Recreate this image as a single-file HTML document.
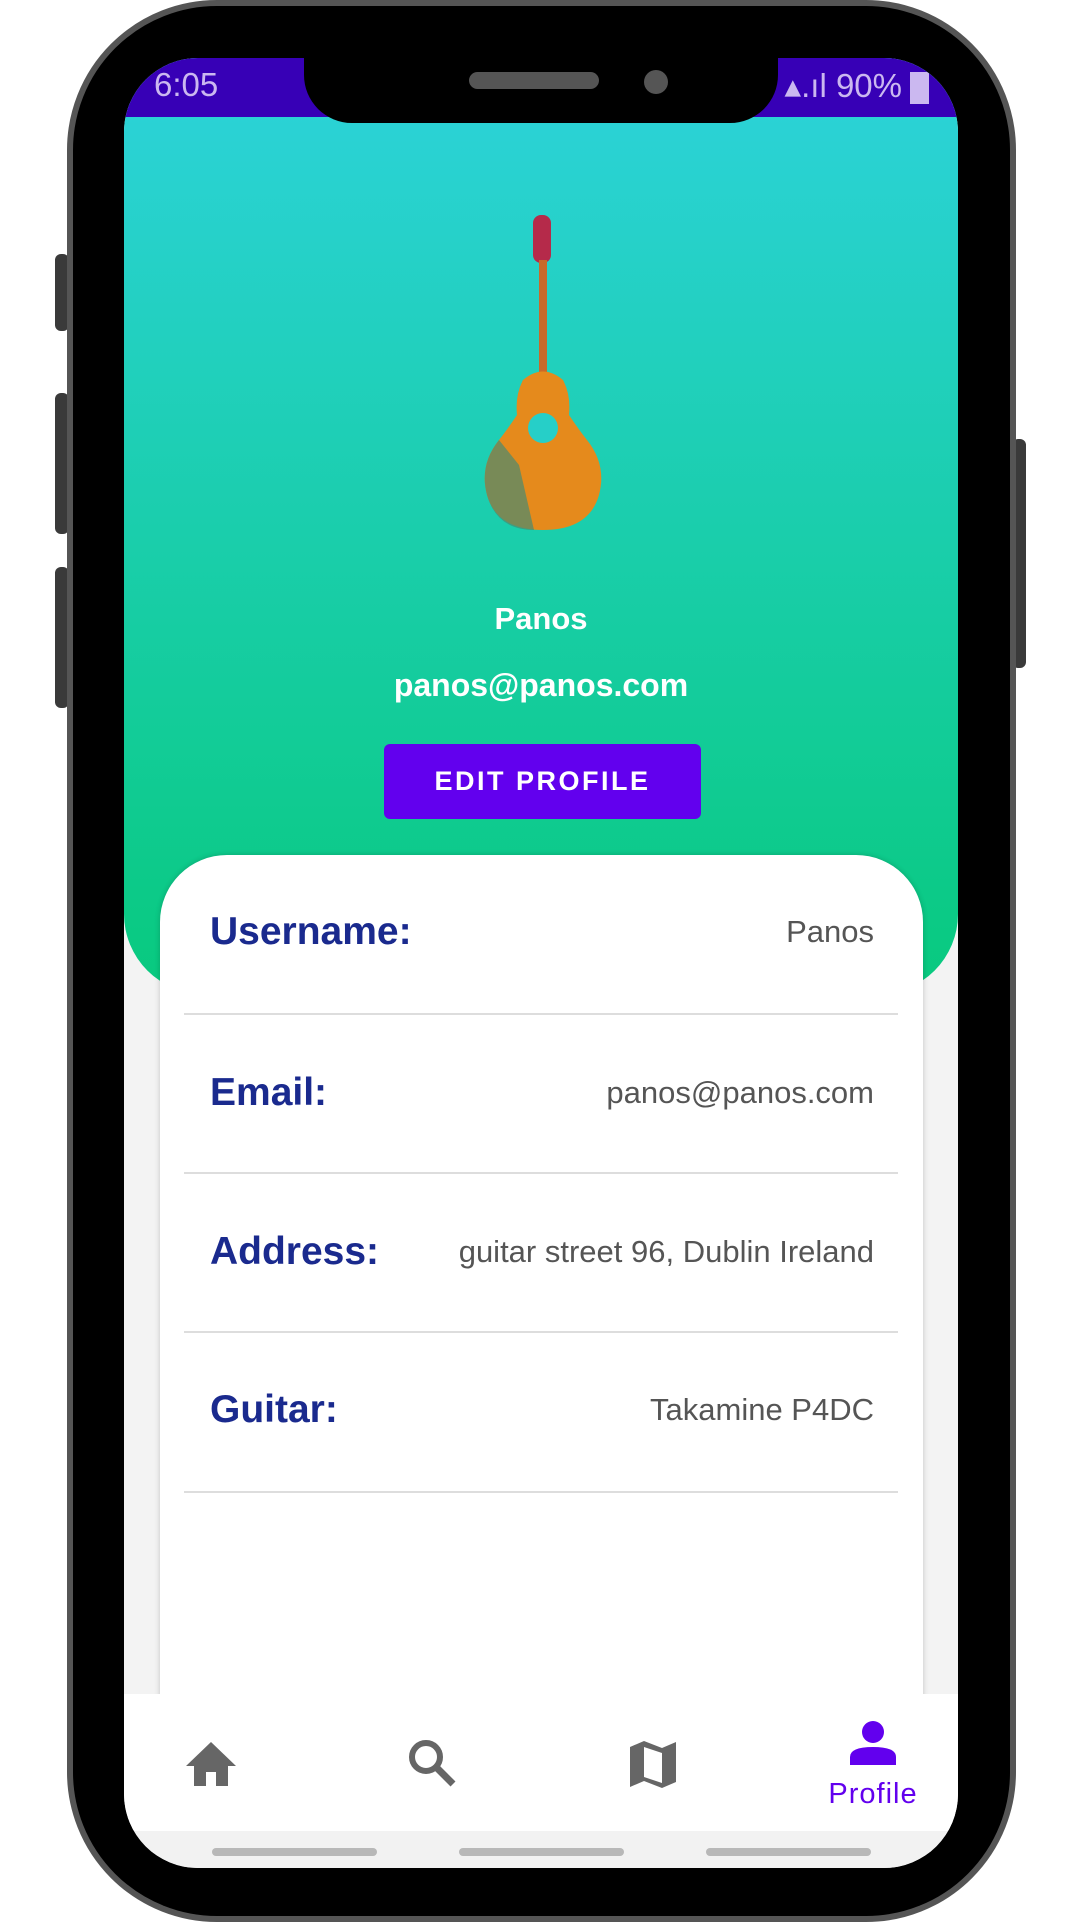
<!DOCTYPE html><html><head><meta charset="utf-8"><style>
*{margin:0;padding:0;box-sizing:border-box}
body{width:1080px;height:1920px;background:#fff;position:relative;overflow:hidden;font-family:"Liberation Sans",Roboto,sans-serif}
.abs{position:absolute}
.phone{left:67px;top:0;width:949px;height:1922px;background:#000;border:6px solid #555;border-radius:150px}
.btn{background:#3a3a3a;border-radius:6px}
.screen{left:124px;top:58px;width:834px;height:1810px;border-radius:74px;overflow:hidden;background:#f3f3f3}
.grad{left:0;top:0;width:834px;height:936px;background:linear-gradient(#2dd3db,#08c97e);border-radius:0 0 80px 80px}
.status{left:0;top:0;width:834px;height:59px;background:#3700b6;color:#cbb8f0;font-size:33px}
.notch{left:180px;top:0;width:474px;height:65px;background:#000;border-radius:0 0 48px 48px}
.card{left:36px;top:797px;width:763px;height:900px;background:#fff;border-radius:67px 67px 0 0;box-shadow:0 0 6px rgba(0,0,0,.2)}
.row{position:absolute;left:50px;width:664px;display:flex;justify-content:space-between;align-items:center}
.lab{font-weight:bold;color:#1a2a8e;font-size:39px}
.val{color:#555;font-size:31px}
.div{position:absolute;left:24px;width:714px;height:2px;background:#ddd}
.nav{left:0;top:1636px;width:834px;height:137px;background:#fff}
.bar{left:0;top:1773px;width:834px;height:37px;background:#f2f2f2}
.pill{position:absolute;top:17px;width:165px;height:8px;border-radius:4px;background:#b8b8b8}
</style></head><body>
<div class="abs btn" style="left:55px;top:254px;width:14px;height:77px"></div>
<div class="abs btn" style="left:55px;top:393px;width:14px;height:141px"></div>
<div class="abs btn" style="left:55px;top:567px;width:14px;height:141px"></div>
<div class="abs btn" style="left:1012px;top:439px;width:14px;height:229px"></div>
<div class="abs phone"></div>
<div class="abs screen">
 <div class="abs grad"></div>
 <div class="abs status"><span class="abs" style="left:30px;top:8px">6:05</span><span class="abs" style="right:56px;top:8px">▴.ıl 90%</span><div class="abs" style="left:786px;top:14px;width:19px;height:32px;background:#cbb8f0"></div></div>
 <div class="abs notch"><div class="abs" style="left:165px;top:14px;width:130px;height:17px;border-radius:9px;background:#555"></div><div class="abs" style="left:340px;top:12px;width:24px;height:24px;border-radius:50%;background:#555"></div></div>
 <svg class="abs" style="left:355px;top:157px" width="128" height="315" viewBox="0 0 128 315">
  <rect x="54" y="0" width="18" height="48" rx="8" fill="#b52a4a"/>
  <rect x="60" y="45" width="8" height="125" fill="#c86a2a"/>
  <path d="M44 165 Q64 148 84 165 Q92 180 90 200 Q100 215 108 225 Q128 250 120 280 Q110 315 64 315 Q18 315 8 280 Q0 250 20 225 Q28 215 38 200 Q36 180 44 165 Z" fill="#e58a1c"/>
  <path d="M8 280 Q0 250 20 225 L40 250 L55 315 Q18 315 8 280Z" fill="#4a8a70" opacity=".7"/>
  <circle cx="64" cy="213" r="15" fill="#26cfc8"/>
 </svg>
 <div class="abs" style="left:0;width:834px;top:543px;text-align:center;color:#fff;font-weight:bold;font-size:31px">Panos</div>
 <div class="abs" style="left:0;width:834px;top:609px;text-align:center;color:#fff;font-weight:bold;font-size:32px">panos@panos.com</div>
 <div class="abs" style="left:260px;top:686px;width:317px;height:75px;background:#6200ee;border-radius:6px;color:#fff;font-size:27px;font-weight:bold;letter-spacing:2.5px;text-align:center;line-height:75px">EDIT PROFILE</div>
 <div class="abs card">
  <div class="row" style="top:55px"><span class="lab">Username:</span><span class="val">Panos</span></div>
  <div class="div" style="top:158px"></div>
  <div class="row" style="top:216px"><span class="lab">Email:</span><span class="val">panos@panos.com</span></div>
  <div class="div" style="top:317px"></div>
  <div class="row" style="top:375px"><span class="lab">Address:</span><span class="val">guitar street 96, Dublin Ireland</span></div>
  <div class="div" style="top:476px"></div>
  <div class="row" style="top:533px"><span class="lab">Guitar:</span><span class="val">Takamine P4DC</span></div>
  <div class="div" style="top:636px"></div>
 </div>
 <div class="abs nav">
  <svg class="abs" style="left:62px;top:48px" width="50" height="44" viewBox="0 0 50 44"><path d="M25 0 L50 24 H42 V44 H30 V30 H20 V44 H8 V24 H0Z" fill="#666"/></svg>
  <svg class="abs" style="left:283px;top:44px" width="50" height="50" viewBox="0 0 50 50"><circle cx="19" cy="19" r="14" fill="none" stroke="#666" stroke-width="6"/><path d="M29 29 L46 46" stroke="#666" stroke-width="7"/></svg>
  <svg class="abs" style="left:506px;top:47px" width="46" height="47" viewBox="0 0 46 47"><path d="M0 6 L14 0 L32 7 L46 1 V41 L32 47 L14 40 L0 46Z M14 6 V36 L32 42 V12Z" fill="#666" fill-rule="evenodd"/></svg>
  <svg class="abs" style="left:726px;top:27px" width="46" height="44" viewBox="0 0 46 44"><circle cx="23" cy="11" r="11" fill="#6200ee"/><path d="M0 44 V36 Q0 26 23 26 Q46 26 46 36 V44Z" fill="#6200ee"/></svg>
  <div class="abs" style="left:690px;top:84px;width:118px;text-align:center;color:#6200ee;font-size:29px;letter-spacing:1px">Profile</div>
 </div>
 <div class="abs bar"><div class="pill" style="left:88px"></div><div class="pill" style="left:335px"></div><div class="pill" style="left:582px"></div></div>
</div>
</body></html>
